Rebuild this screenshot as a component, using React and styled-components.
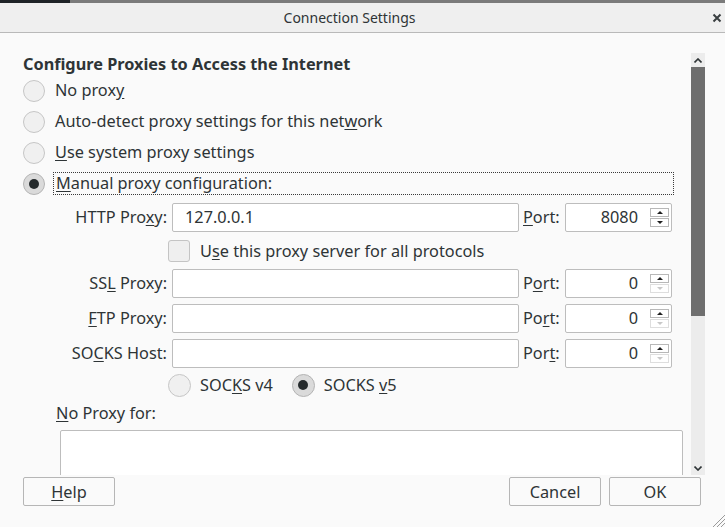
import styled, { createGlobalStyle } from "styled-components";

const Global = createGlobalStyle`
    html, body {
        margin: 0;
        padding: 0;
        background: #fafafa;
    }

    body {
        font-family: "Noto Sans", "Open Sans", sans-serif;
        color: #2e3436;
    }
`;

const Window = styled.div`
    position: relative;
    width: 725px;
    height: 527px;
    display: flex;
    flex-direction: column;
    overflow: hidden;
    background: #fafafa;
`;

const TopStrip = styled.div`
    height: 3px;
    background: #7b7b7b;
    display: flex;
`;

const StripDark = styled.div`
    width: 70px;
    background: #1e2327;
`;

const TitleBar = styled.header`
    height: 29px;
    border-bottom: 1px solid #b9b9b9;
    background: #efefef;
    display: flex;
    align-items: center;
`;

const Title = styled.h1`
    flex: 1;
    margin: 0;
    text-align: center;
    font-size: 14px;
    font-weight: 400;
    color: #2e3436;
`;

const CloseButton = styled.button`
    width: 26px;
    height: 12px;
    padding: 0 3px 0 0;
    border: none;
    background: none;
    display: flex;
    align-items: center;
    justify-content: flex-end;
`;

const Body = styled.div`
    height: 442px;
    display: flex;
`;

const Scroller = styled.div`
    flex: 1;
    overflow: hidden;
`;

const Content = styled.div`
    padding: 20px 0 0 23px;
    display: flex;
    flex-direction: column;
    font-size: 16.3px;
`;

const Heading = styled.h2`
    margin: 0;
    height: 22px;
    line-height: 22px;
    font-size: 16.3px;
    font-weight: 700;
`;

const RadioRow = styled.label`
    height: 31px;
    display: flex;
    align-items: center;
`;

const Radio = styled.span`
    flex: none;
    width: ${(p) => p.$size || 22}px;
    height: ${(p) => p.$size || 22}px;
    box-sizing: border-box;
    border-radius: 50%;
    border: 1px solid ${(p) => (p.$checked ? "#b4b4b4" : "#c6c6c6")};
    background: ${(p) => (p.$checked ? "#dadada" : "#f0f0f0")};
    display: flex;
    align-items: center;
    justify-content: center;

    &::after {
        content: "";
        display: ${(p) => (p.$checked ? "block" : "none")};
        width: 10px;
        height: 10px;
        border-radius: 50%;
        background: #252a2c;
    }
`;

const RadioText = styled.span`
    margin-left: 10px;
    line-height: 21px;
`;

const FocusText = styled(RadioText)`
    flex: 1;
    margin-left: 8px;
    margin-right: 17px;
    padding-left: 2px;
    border: 1px dotted #3a3a3a;
`;

const FieldRow = styled.div`
    height: 29px;
    margin-top: ${(p) => p.$gap ?? 6}px;
    display: flex;
    align-items: stretch;
`;

const FieldLabel = styled.span`
    width: 144px;
    padding-right: 5px;
    text-align: right;
    line-height: 29px;
    white-space: nowrap;
`;

const TextInput = styled.div`
    width: 347px;
    box-sizing: border-box;
    border: 1px solid #bdbdbd;
    border-radius: 2px;
    background: #ffffff;
    padding-left: 12px;
    line-height: 27px;
`;

const PortLabel = styled.span`
    width: 42px;
    padding-left: 4px;
    line-height: 29px;
`;

const PortBox = styled.div`
    width: 107px;
    box-sizing: border-box;
    border: 1px solid #bdbdbd;
    border-radius: 2px;
    background: #ffffff;
    display: flex;
    align-items: center;
`;

const PortValue = styled.span`
    flex: 1;
    text-align: right;
    line-height: 27px;
`;

const Spinner = styled.div`
    width: 19px;
    margin: 0 2px 0 12px;
    display: flex;
    flex-direction: column;
    gap: 1px;
`;

const SpinButton = styled.span`
    height: 9px;
    box-sizing: border-box;
    border: 1px solid ${(p) => (p.$disabled ? "#dedede" : "#b8b8b8")};
    background: #ffffff;
    display: flex;
    align-items: center;
    justify-content: center;

    &::after {
        content: "";
        width: 0;
        height: 0;
        border-left: 3px solid transparent;
        border-right: 3px solid transparent;
        ${(p) => (p.$down ? "border-top" : "border-bottom")}: 3px solid
            ${(p) => (p.$disabled ? "#c8c8c8" : "#1f1f1f")};
    }
`;

const CheckRow = styled.label`
    height: 37px;
    padding-left: 145px;
    display: flex;
    align-items: center;
`;

const CheckBox = styled.span`
    width: 22px;
    height: 22px;
    box-sizing: border-box;
    border: 1px solid #c4c4c4;
    border-radius: 3px;
    background: #efefef;
`;

const CheckText = styled.span`
    margin-left: 10px;
`;

const SocksRow = styled.div`
    height: 34px;
    padding-left: 145px;
    display: flex;
    align-items: center;
`;

const SocksOption = styled.label`
    display: flex;
    align-items: center;
    margin-right: 19px;
`;

const SocksText = styled.span`
    margin-left: 9px;
`;

const NoProxyLabel = styled.span`
    height: 22px;
    line-height: 22px;
    padding-left: 33px;
`;

const TextArea = styled.div`
    margin: 6px 0 0 37px;
    width: 623px;
    height: 100px;
    box-sizing: border-box;
    border: 1px solid #bdbdbd;
    border-radius: 2px;
    background: #ffffff;
`;

const ScrollTrack = styled.div`
    width: 14px;
    margin: 20px 20px 0 0;
    background: #ececec;
    display: flex;
    flex-direction: column;
`;

const ScrollArrow = styled.div`
    height: 14px;
    display: flex;
    align-items: center;
    justify-content: center;
`;

const ScrollThumb = styled.div`
    height: 249px;
    background: #6e6e6e;
`;

const ScrollRest = styled.div`
    flex: 1;
`;

const Footer = styled.footer`
    flex: 1;
    padding: 2px 24px 0 23px;
    display: flex;
    justify-content: space-between;
    align-items: flex-start;
`;

const ButtonGroup = styled.div`
    display: flex;
    gap: 8px;
`;

const Button = styled.button`
    width: 92px;
    height: 29px;
    border: 1px solid #b6b6b6;
    border-radius: 2px;
    background: #fafafa;
    color: #2e3436;
    font-family: inherit;
    font-size: 16.3px;
    padding: 0;
`;

const Grip = styled.svg`
    position: absolute;
    right: 0;
    bottom: 0;
`;

const Mn = styled.u`
    text-decoration: underline;
    text-underline-offset: 2px;
`;

function PortField({ label, value, lowDisabled }) {
    return (
        <>
            <PortLabel>{label}</PortLabel>
            <PortBox>
                <PortValue>{value}</PortValue>
                <Spinner>
                    <SpinButton />
                    <SpinButton $down $disabled={lowDisabled} />
                </Spinner>
            </PortBox>
        </>
    );
}

function ProxyRow({ label, value, port, portLabel, gap }) {
    return (
        <FieldRow $gap={gap}>
            <FieldLabel>{label}</FieldLabel>
            <TextInput>{value}</TextInput>
            <PortField label={portLabel} value={port} lowDisabled={port === "0"} />
        </FieldRow>
    );
}

export default function App() {
    return (
        <Window>
            <Global />
            <TopStrip>
                <StripDark />
            </TopStrip>

            <TitleBar>
                <Title>Connection Settings</Title>
                <CloseButton aria-label="Close">
                    <svg width="10" height="10" viewBox="0 0 10 10">
                        <path d="M1.5 1.5 L8.5 8.5 M8.5 1.5 L1.5 8.5" stroke="#3a3f41" strokeWidth="2" />
                    </svg>
                </CloseButton>
            </TitleBar>

            <Body>
                <Scroller>
                    <Content>
                        <Heading>Configure Proxies to Access the Internet</Heading>

                        <RadioRow>
                            <Radio />
                            <RadioText>No prox<Mn>y</Mn></RadioText>
                        </RadioRow>
                        <RadioRow>
                            <Radio />
                            <RadioText>Auto-detect proxy settings for this net<Mn>w</Mn>ork</RadioText>
                        </RadioRow>
                        <RadioRow>
                            <Radio />
                            <RadioText><Mn>U</Mn>se system proxy settings</RadioText>
                        </RadioRow>
                        <RadioRow>
                            <Radio $checked />
                            <FocusText><Mn>M</Mn>anual proxy configuration:</FocusText>
                        </RadioRow>

                        <ProxyRow
                            gap={4}
                            label={<>HTTP Pro<Mn>x</Mn>y:</>}
                            value="127.0.0.1"
                            portLabel={<><Mn>P</Mn>ort:</>}
                            port="8080"
                        />

                        <CheckRow>
                            <CheckBox />
                            <CheckText>U<Mn>s</Mn>e this proxy server for all protocols</CheckText>
                        </CheckRow>

                        <ProxyRow
                            gap={0}
                            label={<>SS<Mn>L</Mn> Proxy:</>}
                            portLabel={<>P<Mn>o</Mn>rt:</>}
                            port="0"
                        />
                        <ProxyRow
                            label={<><Mn>F</Mn>TP Proxy:</>}
                            portLabel={<>Po<Mn>r</Mn>t:</>}
                            port="0"
                        />
                        <ProxyRow
                            label={<>SO<Mn>C</Mn>KS Host:</>}
                            portLabel={<>Por<Mn>t</Mn>:</>}
                            port="0"
                        />

                        <SocksRow>
                            <SocksOption>
                                <Radio $size={23} />
                                <SocksText>SOC<Mn>K</Mn>S v4</SocksText>
                            </SocksOption>
                            <SocksOption>
                                <Radio $size={23} $checked />
                                <SocksText>SOCKS <Mn>v</Mn>5</SocksText>
                            </SocksOption>
                        </SocksRow>

                        <NoProxyLabel><Mn>N</Mn>o Proxy for:</NoProxyLabel>
                        <TextArea />
                    </Content>
                </Scroller>

                <ScrollTrack>
                    <ScrollArrow>
                        <svg width="8" height="5" viewBox="0 0 8 5">
                            <path d="M0.5 4.5 L4 1 L7.5 4.5" stroke="#2e3436" strokeWidth="1.6" fill="none" />
                        </svg>
                    </ScrollArrow>
                    <ScrollThumb />
                    <ScrollRest />
                    <ScrollArrow>
                        <svg width="8" height="5" viewBox="0 0 8 5">
                            <path d="M0.5 0.5 L4 4 L7.5 0.5" stroke="#2e3436" strokeWidth="1.6" fill="none" />
                        </svg>
                    </ScrollArrow>
                </ScrollTrack>
            </Body>

            <Footer>
                <Button><Mn>H</Mn>elp</Button>
                <ButtonGroup>
                    <Button>Cancel</Button>
                    <Button>OK</Button>
                </ButtonGroup>
            </Footer>

            <Grip width="14" height="14" viewBox="0 0 14 14">
                <path d="M2 14 L14 2 M6 14 L14 6 M10 14 L14 10" stroke="#9a9a9a" strokeWidth="1" />
            </Grip>
        </Window>
    );
}
